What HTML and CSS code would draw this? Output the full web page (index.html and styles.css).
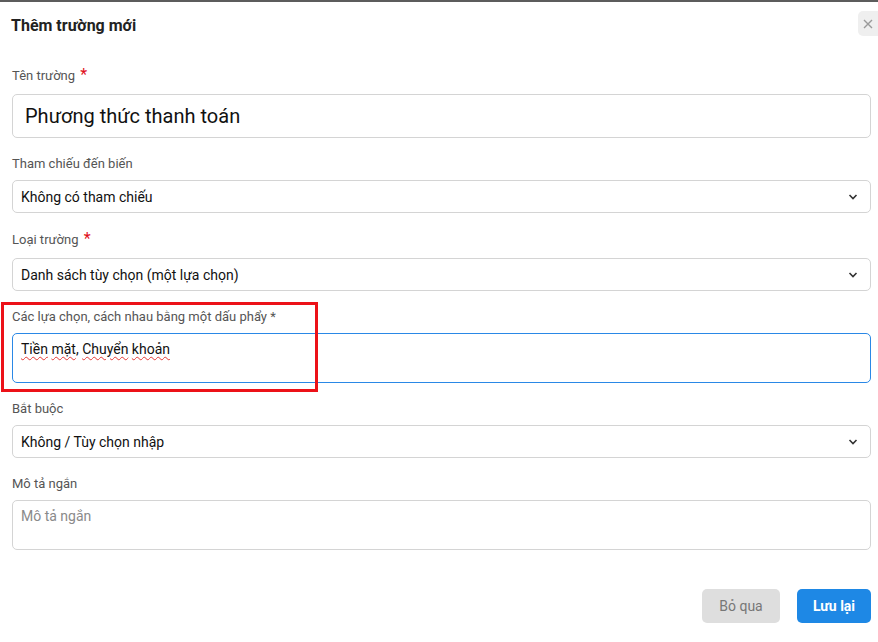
FILE: index.html
```html
<!DOCTYPE html>
<html>
<head>
<link rel="stylesheet" href="styles.css">
<meta charset="UTF-8">
<title>Thêm trường mới</title>
</head>
<body>
<div class="dialog">
	<div class="dialog_head">
		<span class="dialog_title">Thêm trường mới</span>
		<button class="btn_close" type="button">
			<svg width="10" height="10" viewBox="0 0 10 10"><path d="M1 1L9 9M9 1L1 9" stroke="#9a9a9a" stroke-width="1.4" fill="none"/></svg>
		</button>
	</div>
	<form class="field_form">
		<div class="field">
			<label class="field_label has_req">Tên trường <span class="req">*</span></label>
			<input class="input input_big" type="text" value="Phương thức thanh toán">
		</div>
		<div class="field">
			<label class="field_label">Tham chiếu đến biến</label>
			<div class="select">Không có tham chiếu<svg class="chev" width="10" height="6" viewBox="0 0 10 6"><path d="M1.5 1L5 4.5L8.5 1" stroke="#333" stroke-width="1.6" fill="none"/></svg></div>
		</div>
		<div class="field">
			<label class="field_label has_req">Loại trường <span class="req">*</span></label>
			<div class="select">Danh sách tùy chọn (một lựa chọn)<svg class="chev" width="10" height="6" viewBox="0 0 10 6"><path d="M1.5 1L5 4.5L8.5 1" stroke="#333" stroke-width="1.6" fill="none"/></svg></div>
		</div>
		<div class="field field_marked">
			<label class="field_label">Các lựa chọn, cách nhau bằng một dấu phẩy *</label>
			<div class="textarea is_focus"><span class="typo">Tiền</span> <span class="typo">mặt</span>, <span class="typo">Chuyển</span> <span class="typo">khoản</span></div>
			<div class="mark_box"></div>
		</div>
		<div class="field">
			<label class="field_label">Bắt buộc</label>
			<div class="select">Không / Tùy chọn nhập<svg class="chev" width="10" height="6" viewBox="0 0 10 6"><path d="M1.5 1L5 4.5L8.5 1" stroke="#333" stroke-width="1.6" fill="none"/></svg></div>
		</div>
		<div class="field">
			<label class="field_label">Mô tả ngắn</label>
			<div class="textarea placeholder">Mô tả ngắn</div>
		</div>
		<div class="form_foot">
			<button class="btn btn_cancel" type="button">Bỏ qua</button>
			<button class="btn btn_save" type="button">Lưu lại</button>
		</div>
	</form>
</div>
</body>
</html>
```
FILE: styles.css
```css
html, body {
	margin: 0;
	padding: 0;
	background: #fff;
	overflow: hidden;
}
body {
	font-family: Roboto, "Liberation Sans", Arial, sans-serif;
	color: #222;
}
.dialog {
	border-top: 2px solid #5c5c5c;
	height: 640px;
}
.dialog_head {
	display: flex;
	justify-content: space-between;
	align-items: flex-start;
	padding: 9px 0 0 11px;
	height: 48px;
	box-sizing: border-box;
}
.dialog_title {
	font-size: 16px;
	font-weight: 700;
	color: #222;
	line-height: 19px;
	margin-top: 5px;
}
.btn_close {
	width: 26px;
	height: 25px;
	margin-right: -6px;
	border: 0;
	border-radius: 5px;
	background: #efefef;
	padding: 0 6px 0 0;
	display: flex;
	align-items: center;
	justify-content: center;
}
.field_form {
	padding: 17px 7px 0 12px;
}
.field {
	margin-bottom: 18px;
}
.field_label {
	display: block;
	font-size: 13px;
	line-height: 16px;
	color: #555;
	margin-bottom: 8px;
}
.field_label.has_req {
	margin-bottom: 10px;
}
.req {
	color: #e0101a;
	font-size: 16px;
	margin-left: 2px;
}
.input {
	display: block;
	width: 100%;
	box-sizing: border-box;
	border: 1px solid #d4d4d4;
	border-radius: 5px;
	font-family: inherit;
	color: #111;
	outline: none;
}
.input_big {
	height: 44px;
	font-size: 20px;
	padding: 0 12px;
}
.select {
	display: flex;
	align-items: center;
	justify-content: space-between;
	height: 33px;
	box-sizing: border-box;
	border: 1px solid #d4d4d4;
	border-radius: 5px;
	padding: 0 12px 0 8px;
	font-size: 14px;
	color: #111;
}
.chev {
	flex: none;
}
.textarea {
	height: 50px;
	box-sizing: border-box;
	border: 1px solid #d4d4d4;
	border-radius: 5px;
	padding: 6px 8px;
	font-size: 14px;
	line-height: 18px;
	color: #111;
}
.textarea.is_focus {
	border-color: #2a88e6;
}
.textarea.placeholder {
	color: #8a8a8a;
}
.typo {
	text-decoration: underline wavy #e53935;
	text-decoration-thickness: 1px;
	text-underline-offset: 2px;
}
.field_marked {
	position: relative;
}
/* red highlight frame over the options field */
.mark_box {
	position: absolute;
	left: -11px;
	top: -7px;
	width: 317px;
	height: 90px;
	border: 3px solid #ec1118;
	box-sizing: border-box;
	pointer-events: none;
}
.form_foot {
	display: flex;
	justify-content: flex-end;
	gap: 17px;
	padding-top: 21px;
}
.btn {
	height: 34px;
	border: 0;
	border-radius: 5px;
	font-family: inherit;
	font-size: 14px;
	padding: 0;
}
.btn_cancel {
	width: 78px;
	background: #dedede;
	color: #777;
}
.btn_save {
	width: 74px;
	background: #1e88e5;
	color: #fff;
	font-weight: 700;
}
```
